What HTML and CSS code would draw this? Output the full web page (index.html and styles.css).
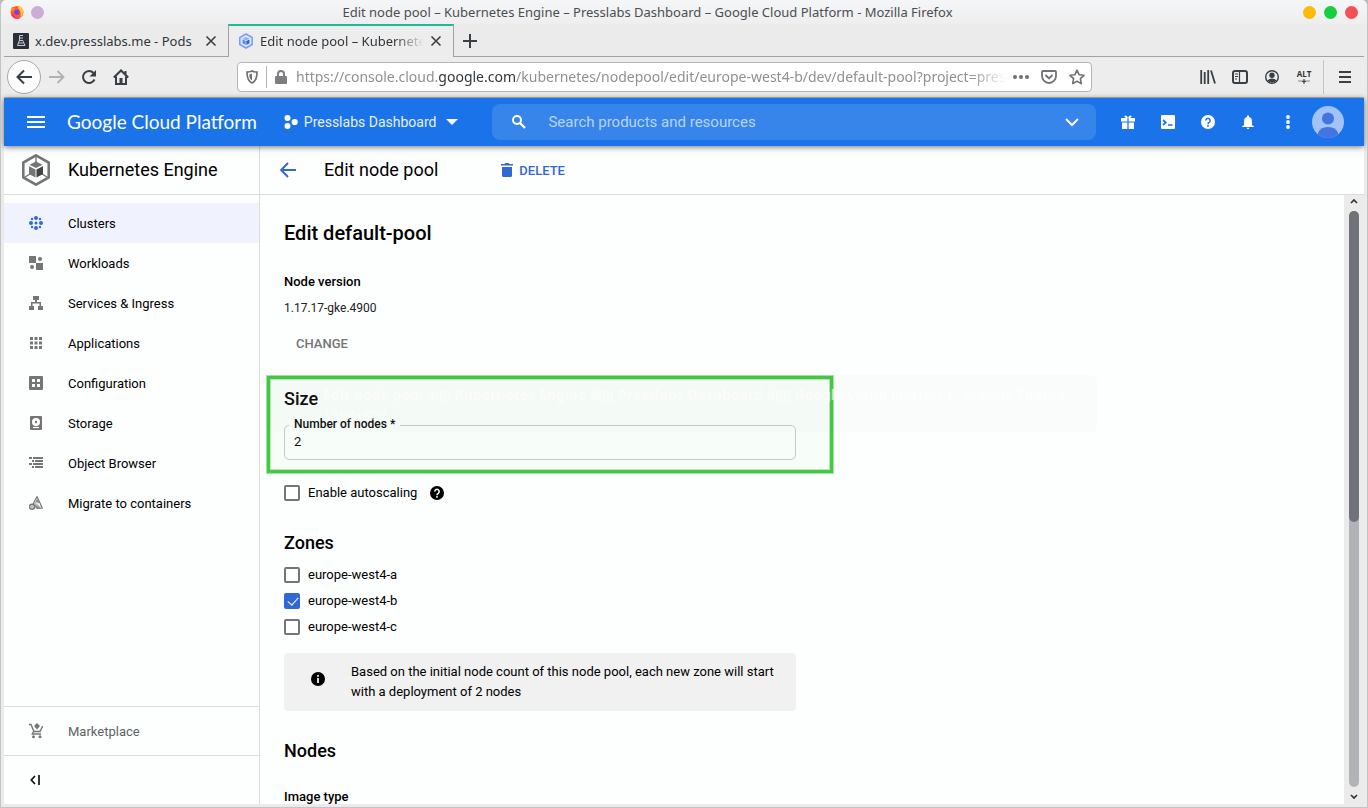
FILE: index.html
```html
<!DOCTYPE html>
<html lang="en">
<head>
<meta charset="utf-8">
<title>Edit node pool – Kubernetes Engine</title>
<link rel="stylesheet" href="styles.css">
</head>
<body>
<div class="window">
  <div class="titlebar">
    <svg class="fx" viewBox="0 0 14 14" width="14" height="14"><circle cx="7" cy="7.300" r="6.400" fill="#ff5a36"/><path d="M8 0c1 1 4.500 2.500 5.300 6 .3 3-1.300 5-2.800 6 1-4-1-8-2.500-8.500z" fill="#ffc62e"/><path d="M.7 6C.8 3.500 2 2 2.500 1.500 3 3 4 3 5 3.500L3 6z" fill="#ff8a1e"/><path d="M1.200 9.500a6.300 6.300 0 0 0 9 3.500c-3 .5-6-1-7-3.500z" fill="#f0246d"/><circle cx="6.800" cy="7.300" r="2.600" fill="#7b3fe0"/></svg>
    <span class="dot dot-pin"></span>
    <span class="win-title">Edit node pool – Kubernetes Engine – Presslabs Dashboard – Google Cloud Platform - Mozilla Firefox</span>
    <button class="dot dot-min" aria-label="Minimize"></button>
    <button class="dot dot-max" aria-label="Maximize"></button>
    <button class="dot dot-close" aria-label="Close"></button>
  </div>

  <div class="tabs">
    <div class="tab">
      <svg viewBox="0 0 16 16" width="16" height="16"><rect width="16" height="16" rx="1" fill="#2b2f36"/><path d="M6.500 2.500h3.500M7 5h3M6.500 2.500v4.500L4.500 12.500h7.500L9.500 7M5.500 10h5M6.500 7.500h3" fill="none" stroke="#c9ccd0"/></svg>
      <span class="tab-text">x.dev.presslabs.me - Pods</span>
      <button class="icon-btn" aria-label="Close tab"><svg viewBox="0 0 12 12" width="12" height="12"><path d="M1.500 1.500l9 9M10.500 1.500l-9 9" stroke="#3a3f44" stroke-width="1.600"/></svg></button>
    </div>
    <div class="tab tab-active">
      <svg viewBox="0 0 16 16" width="16" height="16"><path d="M8 1l6.200 3.500v7L8 15l-6.200-3.500v-7z" fill="#dfe8fb" stroke="#7da0ee" stroke-width="1.600"/><path d="M8 4l3.500 1.800L8 7.600 4.500 5.800z" fill="#8fb0f4"/><path d="M4.500 6.500l3.200 1.600V12L4.500 10.300z" fill="#5a8aee"/><path d="M11.500 6.500L8.300 8.100V12l3.200-1.700z" fill="#3367d6"/></svg>
      <span class="tab-text tab-fade">Edit node pool – Kubernetes Engine</span>
      <button class="icon-btn" aria-label="Close tab"><svg viewBox="0 0 12 12" width="12" height="12"><path d="M1.500 1.500l9 9M10.500 1.500l-9 9" stroke="#3a3f44" stroke-width="1.600"/></svg></button>
    </div>
    <button class="icon-btn new-tab" aria-label="New tab"><svg viewBox="0 0 14 14" width="14" height="14"><path d="M7 0v14M0 7h14" stroke="#3a3f44" stroke-width="2"/></svg></button>
  </div>

  <div class="toolbar">
    <button class="back" aria-label="Back"><svg viewBox="0 0 16 16" width="16" height="16"><path d="M16 8H1.500M8 1.500L1.500 8 8 14.500" fill="none" stroke="#3a3f44" stroke-width="2"/></svg></button>
    <button class="icon-btn tool" aria-label="Forward"><svg viewBox="0 0 16 16" width="16" height="16"><path d="M0 8h14.500M8.500 2L14.500 8l-6 6" fill="none" stroke="#b0b1b2" stroke-width="1.800"/></svg></button>
    <button class="icon-btn tool" aria-label="Reload"><svg viewBox="0 0 16 16" width="16" height="16"><path d="M13.500 10.500A6 6 0 1 1 12.500 4" fill="none" stroke="#3a3f44" stroke-width="2"/><path d="M15 1v6.500H8.500z" fill="#3a3f44"/></svg></button>
    <button class="icon-btn tool" aria-label="Home"><svg viewBox="0 0 16 16" width="16" height="16"><path d="M.8 8.500L8 1.500l7.200 7M3 7.500V15h10V7.500M12.500 2v4" fill="none" stroke="#3a3f44" stroke-width="2"/><path d="M6.500 9h3v6h-3z" fill="#3a3f44"/></svg></button>
    <div class="urlbar">
      <svg viewBox="0 0 12 14" width="12" height="14"><path d="M6 1C4.500 2 3 2 1 2c0 5 .5 9 5 11 4.500-2 5-6 5-11C9 2 7.500 2 6 1z" fill="none" stroke="#6f7175" stroke-width="1.700"/><path d="M6 3.500v7C4 9.500 3.300 7.500 3.300 4.300 4.500 4.200 5 4 6 3.500z" fill="#6f7175"/></svg>
      <span class="url-sep"></span>
      <svg class="lock" viewBox="0 0 12 14" width="12" height="14"><path d="M3 7V4a3 3 0 0 1 6 0v3" fill="none" stroke="#7c7e81" stroke-width="2"/><rect y="6" width="12" height="8" rx="1" fill="#7c7e81"/></svg>
      <span class="url">https://console.cloud.<b>google.com</b>/kubernetes/nodepool/edit/europe-west4-b/dev/default-pool?project=presslabs-dashboard</span>
      <button class="icon-btn" aria-label="Page actions"><svg viewBox="0 0 16 16" width="16" height="16"><g fill="#6f7175"><circle cx="2" cy="8" r="2"/><circle cx="8" cy="8" r="2"/><circle cx="14" cy="8" r="2"/></g></svg></button>
      <button class="icon-btn" aria-label="Save to Pocket"><svg viewBox="0 0 16 16" width="16" height="16"><path d="M2 2h12q1 0 1 1v4a7 7 0 0 1-14 0V3q0-1 1-1z" fill="none" stroke="#6f7175" stroke-width="1.800"/><path d="M4.500 6L8 9.500 11.500 6" fill="none" stroke="#6f7175" stroke-width="1.900"/></svg></button>
      <button class="icon-btn" aria-label="Bookmark"><svg viewBox="0 0 16 16" width="16" height="16"><path d="M8 1.200l2.100 4.500 4.900.6-3.600 3.400.9 4.900L8 12.200l-4.300 2.400.9-4.900L1 6.300l4.900-.6z" fill="none" stroke="#6f7175" stroke-width="1.600" stroke-linejoin="round"/></svg></button>
    </div>
    <button class="icon-btn tool" aria-label="Library"><svg viewBox="0 0 16 16" width="16" height="16"><path d="M1.200 1v14M4.700 3v12M8.200 1v14M11 1.500l4 13" stroke="#3a3f44" stroke-width="1.800"/></svg></button>
    <button class="icon-btn tool" aria-label="Sidebars"><svg viewBox="0 0 16 16" width="16" height="16"><rect x="1" y="2" width="14" height="12" rx="2" fill="none" stroke="#3a3f44" stroke-width="2"/><path d="M7.500 2v12M3 5h3M3 7.500h3M3 10h2" stroke="#3a3f44" stroke-width="1.200"/></svg></button>
    <button class="icon-btn tool" aria-label="Account"><svg viewBox="0 0 16 16" width="16" height="16"><circle cx="8" cy="8" r="6.300" fill="none" stroke="#3a3f44" stroke-width="1.400"/><circle cx="8" cy="6.200" r="2.700" fill="#3a3f44"/><path d="M3.500 11.500Q5 9.500 8 9.500t4.500 2Q11 13.500 8 13.500t-4.500-2z" fill="#3a3f44"/></svg></button>
    <button class="icon-btn tool alt" aria-label="Alt"><span>ALT</span><svg viewBox="0 0 12 6" width="12" height="6"><path d="M0 3h12" stroke="#bbb" stroke-width="2"/><path d="M6 1v5M4 3.500h4" stroke="#444" stroke-width="1.200"/></svg></button>
    <span class="tool-sep"></span>
    <button class="icon-btn tool" aria-label="Menu"><svg viewBox="0 0 12 14" width="12" height="14"><path d="M0 2h12M0 7h12M0 12h12" stroke="#3a3f44" stroke-width="2"/></svg></button>
  </div>

  <header class="gcp">
    <button class="icon-btn burger" aria-label="Navigation menu"><svg viewBox="0 0 18 12" width="18" height="12"><path d="M0 1h18M0 6h18M0 11h18" stroke="#fff" stroke-width="2"/></svg></button>
    <a class="brand" href="#">Google Cloud Platform</a>
    <button class="project"><svg viewBox="0 0 14 14" width="14" height="14" fill="#fff"><circle cx="3.500" cy="3" r="3"/><circle cx="3.500" cy="11" r="3"/><circle cx="10.700" cy="7" r="3.100"/></svg><span>Presslabs Dashboard</span><svg viewBox="0 0 12 6" width="12" height="6"><path d="M0 0h12L6 6z" fill="#fff"/></svg></button>
    <div class="search">
      <svg viewBox="0 0 14 14" width="14" height="14"><circle cx="5" cy="5" r="4" fill="none" stroke="#fff" stroke-width="2"/><path d="M8 8l5 5" stroke="#fff" stroke-width="2.300"/></svg>
      <input type="text" aria-label="Search" placeholder="Search products and resources">
      <button class="icon-btn" aria-label="Expand search"><svg viewBox="0 0 14 9" width="14" height="9"><path d="M1 1l6 6 6-6" fill="none" stroke="#fff" stroke-width="2"/></svg></button>
    </div>
    <div class="actions">
      <button class="icon-btn" aria-label="Gifts"><svg viewBox="0 0 14 14" width="14" height="14" fill="#fff"><path d="M0 3h14v3.500H0zM1 7.500h12V14H1z"/><path d="M7 3C5 3 3 2.500 3.500 1 4.500-.5 6.500 1 7 3c.5-2 2.500-3.500 3.500-2 .5 1.500-1.500 2-3.500 2z"/><path d="M7 3v11" stroke="#1a73e8" stroke-width="1.200"/></svg></button>
      <button class="icon-btn" aria-label="Cloud Shell"><svg viewBox="0 0 14 14" width="14" height="14"><rect width="14" height="14" rx="1" fill="#fff"/><path d="M2 5L4.800 7.500 2 10M7 10h4.500" fill="none" stroke="#1a73e8" stroke-width="1.700"/></svg></button>
      <button class="icon-btn" aria-label="Help"><svg viewBox="0 0 14 14" width="14" height="14"><circle cx="7" cy="7" r="7" fill="#fff"/><path d="M4.800 5.500a2.200 2.200 0 1 1 3.500 1.800Q7 8 7 9.200M7 10v1.700" fill="none" stroke="#1a73e8" stroke-width="1.500"/></svg></button>
      <button class="icon-btn" aria-label="Notifications"><svg viewBox="0 0 12 14" width="12" height="14" fill="#fff"><path d="M5 .5h2V2q3 .8 3 4.500V10l2 1.500v.5H0v-.5L2 10V6.500Q2 2.800 5 2zM4.500 12.700h3Q7.200 14 6 14t-1.500-1.300z"/></svg></button>
      <button class="icon-btn" aria-label="More"><svg viewBox="0 0 4 14" width="4" height="14" fill="#fff"><circle cx="2" cy="2" r="1.900"/><circle cx="2" cy="7" r="1.900"/><circle cx="2" cy="12" r="1.900"/></svg></button>
      <button class="icon-btn" aria-label="Profile"><svg viewBox="0 0 32 32" width="32" height="32"><defs><clipPath id="av"><circle cx="16" cy="16" r="16"/></clipPath></defs><g clip-path="url(#av)"><rect width="32" height="32" fill="#a1c2fa"/><circle cx="16" cy="12.500" r="6" fill="#4374e0"/><path d="M6 32v-5q2-6 10-6t10 6v5z" fill="#4374e0"/></g></svg></button>
    </div>
  </header>

  <div class="body">
    <aside class="sidebar">
      <div class="product">
        <svg viewBox="0 0 28 32" width="28" height="32"><path d="M14 1.300l12.700 7.300v14.800L14 30.700 1.300 23.400V8.600z" fill="none" stroke="#757575" stroke-width="2.600"/><path d="M14 2v6M3 23l5-3M25 23l-5-3" stroke="#757575" stroke-width="1.400"/><path d="M14 7.500l6.500 3.300-6.500 3.300-6.500-3.300z" fill="#757575"/><path d="M7 12.200l6.500 3.300v8L7 20z" fill="#757575"/><path d="M21 12.200l-6.500 3.300v8L21 20z" fill="#424242"/></svg>
        <span>Kubernetes Engine</span>
      </div>
      <nav class="nav">
        <a class="item current" href="#"><svg viewBox="0 0 14 14" width="14" height="14" fill="#3367d6"><circle cx="7" cy="2" r="2"/><circle cx="2" cy="7" r="2"/><circle cx="12" cy="7" r="2"/><circle cx="7" cy="12" r="2"/><circle cx="7" cy="7" r="1.500"/><circle cx="3" cy="3" r="1.200"/><circle cx="11" cy="3" r="1.200"/><circle cx="3" cy="11" r="1.200"/><circle cx="11" cy="11" r="1.200"/></svg><span>Clusters</span></a>
        <a class="item" href="#"><svg viewBox="0 0 14 14" width="14" height="14" fill="#757575"><path d="M0 0h7v7H0zM7 7h7v7H7z"/><circle cx="11" cy="3" r="2"/><circle cx="3" cy="11" r="2"/></svg><span>Workloads</span></a>
        <a class="item" href="#"><svg viewBox="0 0 14 14" width="14" height="14" fill="#757575"><path d="M4 0h6v4H8v2h4v4h2v4H9v-4h1.500V7.500h-7V10H5v4H0v-4h2V6h4V4H4z"/></svg><span>Services &amp; Ingress</span></a>
        <a class="item" href="#"><svg viewBox="0 0 14 14" width="14" height="14" fill="#757575"><path d="M1 1h3v3H1zM5.500 1h3v3h-3zM10 1h3v3h-3zM1 5.500h3v3H1zM5.500 5.500h3v3h-3zM10 5.500h3v3h-3zM1 10h3v3H1zM5.500 10h3v3h-3zM10 10h3v3h-3z"/></svg><span>Applications</span></a>
        <a class="item" href="#"><svg viewBox="0 0 14 14" width="14" height="14"><rect width="14" height="14" rx="1" fill="#757575"/><path d="M3 3h3v3H3zM8 3h3v3H8zM3 8h3v3H3zM8 8h3v3H8z" fill="#fff"/></svg><span>Configuration</span></a>
        <a class="item" href="#"><svg viewBox="0 0 14 14" width="14" height="14"><rect x="1" width="12" height="14" rx="1" fill="#757575"/><circle cx="7" cy="6" r="4" fill="#fff"/><circle cx="7" cy="6" r="1.200" fill="#757575"/><path d="M4 11.500h6" stroke="#fff" stroke-width="1.200"/></svg><span>Storage</span></a>
        <a class="item" href="#"><svg viewBox="0 0 14 14" width="14" height="14"><path d="M0 2h3M4 2h10M3 5h2M6 5h8M0 8h3M4 8h10M3 11h2M6 11h8" stroke="#757575" stroke-width="2"/></svg><span>Object Browser</span></a>
        <a class="item" href="#"><svg viewBox="0 0 14 14" width="14" height="14"><path d="M8 .5l5.500 12M8 .5L3.500 9" fill="none" stroke="#757575" stroke-width="1.200"/><path d="M8 2.500l3 5.500-3-1-3 1.500zM4.500 9L8 8l4 3 1 2H7.500z" fill="#8d8d8d"/><path d="M6 6l5 2M7 8.500l5 3" stroke="#fff" stroke-width=".6"/><circle cx="3" cy="10.700" r="2.500" fill="#fff" stroke="#757575" stroke-width="1.500"/><path d="M3 9.500v2.400" stroke="#757575"/></svg><span>Migrate to containers</span></a>
      </nav>
      <a class="item market" href="#"><svg viewBox="0 0 14 16" width="14" height="16"><path d="M0 1.500h2l3 7h6L13.700 3M4.500 8.500L3.300 11H12" fill="none" stroke="#757575" stroke-width="1.400"/><path d="M8 0l3 3-3 3.500L5 3z" fill="#757575"/><circle cx="4.500" cy="13.700" r="1.500" fill="#757575"/><circle cx="11" cy="13.700" r="1.500" fill="#757575"/></svg><span>Marketplace</span></a>
      <button class="collapse" aria-label="Collapse menu"><svg viewBox="0 0 10 10" width="10" height="10"><path d="M5 1L1.300 5 5 9M9 0v10" fill="none" stroke="#111" stroke-width="1.700"/></svg></button>
    </aside>

    <main class="main">
      <div class="page-head">
        <a href="#" class="up" aria-label="Back to cluster"><svg viewBox="0 0 16 16" width="16" height="16"><path d="M16 8H1.500M8 1L1.200 8 8 15" fill="none" stroke="#3367d6" stroke-width="1.900"/></svg></a>
        <h1>Edit node pool</h1>
        <button class="delete"><svg viewBox="0 0 12 14" width="12" height="14" fill="#3367d6"><path d="M0 1h3.500l1-1h3l1 1H12v1.500H0zM1 4h10v8.500q0 1.500-1.500 1.500h-7Q1 14 1 12.500z"/></svg><span>DELETE</span></button>
      </div>
      <div class="scroll-row">
        <form class="content">
          <h2>Edit default-pool</h2>
          <h4>Node version</h4>
          <p class="version">1.17.17-gke.4900</p>
          <button type="button" class="change">CHANGE</button>

          <section class="highlight">
            <h3>Size</h3>
            <fieldset class="outlined">
              <legend><label for="nodes">Number of nodes *</label></legend>
              <input id="nodes" type="text" value="2">
            </fieldset>
          </section>

          <div class="check-row auto"><input type="checkbox" id="auto"><label for="auto">Enable autoscaling</label><svg viewBox="0 0 14 14" width="14" height="14"><circle cx="7" cy="7" r="7" fill="#000"/><path d="M4.800 5.500a2.200 2.200 0 1 1 3.500 1.800Q7 8 7 9.200M7 10v1.700" fill="none" stroke="#fff" stroke-width="1.500"/></svg></div>

          <h3 class="zones">Zones</h3>
          <div class="checks">
            <div class="check-row"><input type="checkbox" id="za"><label for="za">europe-west4-a</label></div>
            <div class="check-row"><input type="checkbox" id="zb" checked><label for="zb">europe-west4-b</label></div>
            <div class="check-row"><input type="checkbox" id="zc"><label for="zc">europe-west4-c</label></div>
          </div>
          <div class="info"><svg viewBox="0 0 14 14" width="14" height="14"><circle cx="7" cy="7" r="7" fill="#000"/><path d="M7 3v1.700M7 6v5" stroke="#fff" stroke-width="1.700"/></svg><p>Based on the initial node count of this node pool, each new zone will start with a deployment of 2 nodes</p></div>
          <h3 class="nodes">Nodes</h3>
          <h4 class="image-type">Image type</h4>

          <div class="toast" aria-hidden="true"><b>Edit node pool â▯▯ Kubernetes Engine â▯▯ Presslabs Dashboard â▯▯ Google Cloud Platform - Mozilla Firefox</b><span>1368x808</span></div>
        </form>
        <div class="scrollbar">
          <svg viewBox="0 0 8 5" width="8" height="5"><path d="M1 4l3-3 3 3" fill="none" stroke="#333" stroke-width="1.700"/></svg>
          <div class="track"><div class="thumb"></div></div>
          <svg viewBox="0 0 8 5" width="8" height="5"><path d="M1 1l3 3 3-3" fill="none" stroke="#333" stroke-width="1.700"/></svg>
        </div>
      </div>
    </main>
  </div>
</div>
</body>
</html>
```
FILE: styles.css
```css
* { box-sizing: border-box; }
body { margin: 0; background: #b8b8b8; font: 13px/20px Roboto, "Liberation Sans", sans-serif; color: #000; }
h1, h2, h3, h4, p { margin: 0; }
svg { display: block; flex: none; }
a { color: inherit; text-decoration: none; }
button { border: 0; padding: 0; margin: 0; background: none; font: inherit; color: inherit; }
.icon-btn { display: flex; align-items: center; justify-content: center; flex: none; }

.window { display: flex; flex-direction: column; height: 100vh; padding: 0 3px 3px; background: #ebebeb; border: solid #c4c4c4; border-width: 0 1px 1px; border-radius: 6px 6px 0 0; overflow: hidden; }

.titlebar { flex: none; display: flex; align-items: center; gap: 7px; height: 24px; margin: 0 -3px; padding: 0 9px; background: linear-gradient(#f5f6f8, #eeeeef); font: 13px/18px "Noto Sans", sans-serif; color: #4a4e52; }
.win-title { flex: 1; text-align: center; padding-right: 52px; white-space: nowrap; overflow: hidden; }
.dot { flex: none; width: 13px; height: 13px; border-radius: 50%; }
.dot-pin { background: #c9aed6; }
.dot-min { background: #fcbc05; }
.dot-max { background: #15cf3d; margin-left: 1px; }
.dot-close { background: #f45056; margin-left: 1px; }

.tabs { flex: none; display: flex; height: 33px; background: #ebebeb; box-shadow: inset 0 -1px #a2a2a2; font: 13px/18px "Noto Sans", sans-serif; color: #31363b; }
.tab { flex: 0 1 224px; min-width: 0; display: flex; align-items: center; gap: 6px; padding: 0 11px 0 9px; }
.tab-active { flex-basis: 226px; background: #ededed; border: solid #a2a2a2; border-width: 0 1px; padding-bottom: 2px; border-top: 2px solid #1abc9c; }
.tab-text { flex: 1; min-width: 0; white-space: nowrap; overflow: hidden; }
.tab-fade { -webkit-mask-image: linear-gradient(to right, #000 82%, transparent); mask-image: linear-gradient(to right, #000 82%, transparent); }
.new-tab { width: 32px; }

.toolbar { flex: none; display: flex; align-items: center; height: 41px; padding: 0 3px; background: #ededed; border-bottom: 1px solid #bcbcbc; }
.back { display: flex; align-items: center; justify-content: center; flex: none; width: 34px; height: 34px; border: 1px solid #a8a8a8; border-radius: 50%; background: #fcfcfc; }
.tool { width: 32px; height: 32px; }
.urlbar { flex: 1; min-width: 0; display: flex; align-items: center; gap: 12px; height: 30px; margin: 0 100px; padding: 0 6px 0 8px; background: #fff; border: 1px solid #b5b5b5; border-radius: 4px; }
.url-sep { width: 1px; height: 22px; margin: 0 -4px; background: #b5b5b5; }
.lock { margin-right: -3px; }
.url { flex: 1; min-width: 0; margin-right: -5px; font: 14px/20px "Noto Sans", sans-serif; color: #8f9092; white-space: nowrap; overflow: hidden; -webkit-mask-image: linear-gradient(to right, #000 95%, transparent); mask-image: linear-gradient(to right, #000 95%, transparent); }
.url b { font-weight: 400; color: #31363b; }
.alt { flex-direction: column; font: 700 8px/8px "Open Sans", sans-serif; color: #333; }
.tool-sep { width: 1px; height: 34px; margin: 0 5px 0 3px; background: #c4c4c4; }

.gcp { position: relative; z-index: 2; flex: none; display: flex; align-items: center; height: 48px; padding: 0 16px 0 23px; background: #1a73e8; box-shadow: 0 1px 6px rgba(0, 0, 0, .55); color: #fff; }
.brand { margin-left: 22px; font: 19px/24px Lato, sans-serif; white-space: nowrap; }
.project { display: flex; align-items: center; gap: 6px; margin-left: 27px; font-size: 14px; white-space: nowrap; color: #e8f0fe; }
.project svg:last-child { margin-left: 4px; }
.search { flex: 1; min-width: 0; display: flex; align-items: center; height: 36px; margin-left: 34px; padding: 0 17px 0 20px; border-radius: 8px; background: #3784eb; }
.search input { flex: 1; min-width: 0; margin-left: 22px; padding: 0; border: 0; outline: 0; background: none; font: 15px/20px Roboto, sans-serif; color: #fff; }
.search input::placeholder { color: #b8d4f8; opacity: 1; }
.actions { display: flex; align-items: center; margin-left: 12px; }
.actions .icon-btn { width: 40px; height: 40px; }

.body { flex: 1; min-height: 0; display: flex; background: #fdfefe; }
.sidebar { flex: none; display: flex; flex-direction: column; width: 256px; border-right: 1px solid #dcdcdc; }
.product { display: flex; align-items: center; gap: 18px; height: 49px; padding-left: 18px; border-bottom: 1px solid #dcdcdc; font-size: 18px; }
.nav { flex: 1; min-height: 0; padding-top: 8px; }
.item { display: flex; align-items: center; gap: 25px; height: 40px; padding-left: 25px; }
.item span, .delete span { padding-top: 2px; }
.current { background: #f0f3fe; }
.market { height: 49px; border-top: 1px solid #dcdcdc; color: #5f6368; }
.collapse { display: flex; align-items: center; height: 49px; padding-left: 26px; border-top: 1px solid #dcdcdc; }

.main { flex: 1; min-width: 0; display: flex; flex-direction: column; }
.page-head { flex: none; display: flex; align-items: center; height: 49px; padding-left: 20px; border-bottom: 1px solid #dcdcdc; }
.page-head h1 { margin-left: 28px; font-size: 18px; font-weight: 400; line-height: 24px; }
.delete { display: flex; align-items: center; gap: 6px; margin-left: 63px; font-weight: 500; color: #3367d6; }

.scroll-row { flex: 1; min-height: 0; display: flex; }
.content { position: relative; flex: 1; min-width: 0; padding: 24px; overflow: hidden; }
h2 { font-size: 20px; font-weight: 500; line-height: 28px; margin-bottom: 25px; }
h3 { font-size: 18px; font-weight: 500; line-height: 24px; }
h4 { font-size: 13px; font-weight: 500; line-height: 20px; }
.version { margin-top: 6px; font-size: 12px; color: #212121; }
.change { display: block; height: 36px; margin: 8px 0 14px; padding: 0 12px; font-weight: 500; color: #757575; }

.highlight { max-width: 566px; margin-left: -17px; padding: 8px 34px 10px 14px; border: 3px solid #45c945; box-shadow: 0 0 0 1px #a2e4a2, inset 0 0 0 1px #b6ebb6; background: #f7fdf9; color: #111; }
.outlined { min-width: 0; margin: 6px 0 0; padding: 0 9px 8px; border: 1px solid #c5cac7; border-radius: 5px; }
.outlined legend { height: 16px; margin-left: -5px; padding: 0 5px; font-size: 12px; font-weight: 500; line-height: 14px; }
.outlined input { display: block; width: 100%; height: 18px; padding: 0; border: 0; outline: 0; background: none; font: 13px/18px Roboto, sans-serif; color: #111; }

.check-row { display: flex; align-items: center; gap: 8px; height: 20px; }
.check-row svg { margin-left: 5px; }
.check-row input { appearance: none; flex: none; width: 16px; height: 16px; margin: 0; border: 2px solid #757575; border-radius: 2px; background: #fff; }
.check-row input:checked { border-color: #3367d6; background: #3367d6; position: relative; }
.check-row input:checked::after { content: ""; position: absolute; left: 4px; top: 0; width: 5px; height: 9px; border: solid #fff; border-width: 0 1px 1px 0; transform: rotate(42deg); }
.auto { margin-top: 10px; }
.zones { margin: 28px 0 10px; }
.checks { display: flex; flex-direction: column; gap: 6px; }
.info { display: flex; align-items: flex-start; gap: 26px; max-width: 512px; margin-top: 16px; padding: 9px 16px 9px 27px; border-radius: 4px; background: #f1f1f1; }
.info svg { margin-top: 10px; }
.nodes { margin: 28px 0 24px; }

.toast { position: absolute; left: 6px; top: 180px; display: flex; flex-direction: column; width: 831px; height: 57px; padding: 10px 0 0 57px; border-radius: 6px; background: rgba(0, 0, 0, .01); font: 14px/20px "Noto Sans", sans-serif; color: rgba(255, 255, 255, .6); white-space: nowrap; overflow: hidden; pointer-events: none; }

.scrollbar { flex: none; display: flex; flex-direction: column; align-items: center; gap: 7px; width: 20px; padding: 4px 0 5px; background: #ebebeb; }
.track { flex: 1; width: 10px; border-radius: 5px; background: #b1b3b7; }
.thumb { height: 54%; border-radius: 5px; background: #6f7378; }
```
